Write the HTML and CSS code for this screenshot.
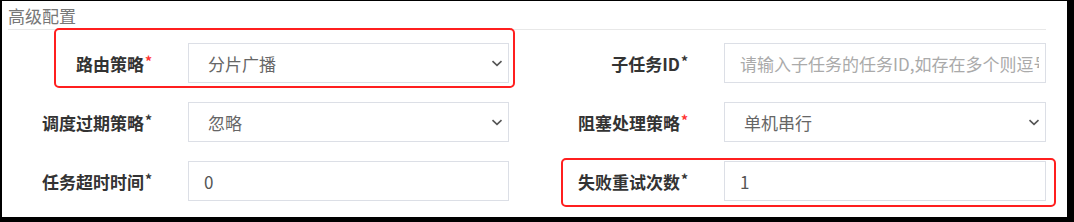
FILE: index.html
```html
<!DOCTYPE html>
<html lang="zh-CN">

<head>
    <meta charset="UTF-8">
    <title>高级配置</title>
    <link rel="stylesheet" href="styles.css">
</head>

<body>
    <div class="panel">
        <div class="section-title">高级配置</div>

        <div class="form-grid">
            <label class="form-label">路由策略<span class="req red">*</span></label>
            <div class="select">
                <span>分片广播</span>
                <svg class="arrow" width="12" height="7" viewBox="0 0 12 7"><path d="M1.5 1.2l4.5 4.2 4.5-4.2" fill="none" stroke="#555" stroke-width="1.6"/></svg>
            </div>
            <label class="form-label">子任务ID<span class="req">*</span></label>
            <input class="text-input" type="text" placeholder="请输入子任务的任务ID,如存在多个则逗号分隔">

            <label class="form-label">调度过期策略<span class="req">*</span></label>
            <div class="select">
                <span>忽略</span>
                <svg class="arrow" width="12" height="7" viewBox="0 0 12 7"><path d="M1.5 1.2l4.5 4.2 4.5-4.2" fill="none" stroke="#555" stroke-width="1.6"/></svg>
            </div>
            <label class="form-label">阻塞处理策略<span class="req red">*</span></label>
            <div class="select">
                <span>单机串行</span>
                <svg class="arrow" width="12" height="7" viewBox="0 0 12 7"><path d="M1.5 1.2l4.5 4.2 4.5-4.2" fill="none" stroke="#555" stroke-width="1.6"/></svg>
            </div>

            <label class="form-label">任务超时时间<span class="req">*</span></label>
            <input class="text-input" type="text" value="0">
            <label class="form-label">失败重试次数<span class="req">*</span></label>
            <input class="text-input" type="text" value="1">
        </div>

        <div class="mark mark-route"></div>
        <div class="mark mark-retry"></div>
    </div>
</body>

</html>
```

FILE: styles.css
```css
html, body {
    margin: 0;
    height: 222px;
    background: #000;
    overflow: hidden;
}

.panel {
    position: relative;
    box-sizing: border-box;
    width: 1065px;
    height: 216px;
    margin: 1px 0 0 2px;
    padding: 3px 21px 0 6px;
    background: #fff;
    font-family: "Noto Sans CJK SC", "Liberation Sans", sans-serif;
}

.section-title {
    font-size: 17px;
    line-height: 24px;
    color: #777;
    padding-bottom: 1px;
    border-bottom: 1px solid #e8e8e8;
}

.form-grid {
    display: grid;
    grid-template-columns: 144px 321px 143px 322px;
    grid-auto-rows: 40px;
    column-gap: 36px;
    row-gap: 19px;
    margin-top: 13px;
}

.form-label {
    display: flex;
    align-items: center;
    justify-content: flex-end;
    font-size: 17px;
    font-weight: 700;
    color: #333;
    white-space: nowrap;
}

.req {
    font-size: 14px;
    margin-left: 1px;
    align-self: flex-start;
    margin-top: 8px;
}

.req.red {
    color: #f33;
}

.select {
    display: flex;
    align-items: center;
    justify-content: space-between;
    box-sizing: border-box;
    border: 1px solid #dcdfe6;
    padding: 0 5px 0 19px;
    font-size: 17px;
    color: #666;
}

.arrow {
    display: block;
}

.text-input {
    box-sizing: border-box;
    width: 100%;
    height: 40px;
    margin: 0;
    border: 1px solid #dcdfe6;
    border-radius: 0;
    padding: 0 6px 0 15px;
    font-family: inherit;
    font-size: 17px;
    color: #555;
    outline: none;
}

.text-input::placeholder {
    color: #aaa;
}

.mark {
    position: absolute;
    border: 2px solid #ff1f1f;
    border-radius: 5px;
}

.mark-route {
    left: 52px;
    top: 27px;
    width: 457px;
    height: 56px;
}

.mark-retry {
    left: 559px;
    top: 157px;
    width: 491px;
    height: 45px;
}
```
